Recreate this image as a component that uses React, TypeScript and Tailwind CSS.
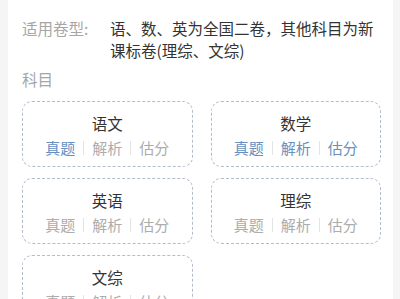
import React from "react";

const subjects = [
  { name: "语文", active: [true, false, false] },
  { name: "数学", active: [true, true, true] },
  { name: "英语", active: [false, false, false] },
  { name: "理综", active: [false, false, false] },
  { name: "文综", active: [false, false, false] },
];

const links = ["真题", "解析", "估分"];

export default function App() {
  return (
    <div
      className="min-h-screen bg-[#f5f5f5] pl-2 pr-[7px]"
      style={{ fontFamily: '"Noto Sans CJK SC", "Noto Sans", sans-serif' }}
    >
      <div className="min-h-[299px] bg-white pl-[14px] pr-3 pt-[17px]">
        {/* 卷型 */}
        <div className="flex text-[15.5px] leading-[22px]">
          <div className="w-[88px] shrink-0 text-[#a6a6a6]">适用卷型:</div>
          <div className="text-[#333]">语、数、英为全国二卷，其他科目为新课标卷(理综、文综)</div>
        </div>

        <div className="mt-[7px] mb-[11px] text-[15.5px] leading-[22px] text-[#a6a6a6]">科目</div>

        {/* Grid */}
        <div className="grid grid-cols-2 gap-x-[18px] gap-y-[11px]">
          {subjects.map((s) => (
            <div
              key={s.name}
              className="h-[66px] rounded-[10px] border border-dashed border-[#b3bccc] pt-[10px] text-center"
            >
              <div className="text-[15.5px] leading-[22px] text-[#333]">{s.name}</div>
              <div className="mt-[3px] flex items-center justify-center text-[15px] leading-[22px]">
                {links.map((l, i) => (
                  <React.Fragment key={l}>
                    {i > 0 && <span className="h-[14px] w-px bg-[#e3e3e3]" />}
                    <span className={`px-2 ${s.active[i] ? "text-[#6590bf]" : "text-[#acacac]"}`}>{l}</span>
                  </React.Fragment>
                ))}
              </div>
            </div>
          ))}
        </div>
      </div>
    </div>
  );
}
